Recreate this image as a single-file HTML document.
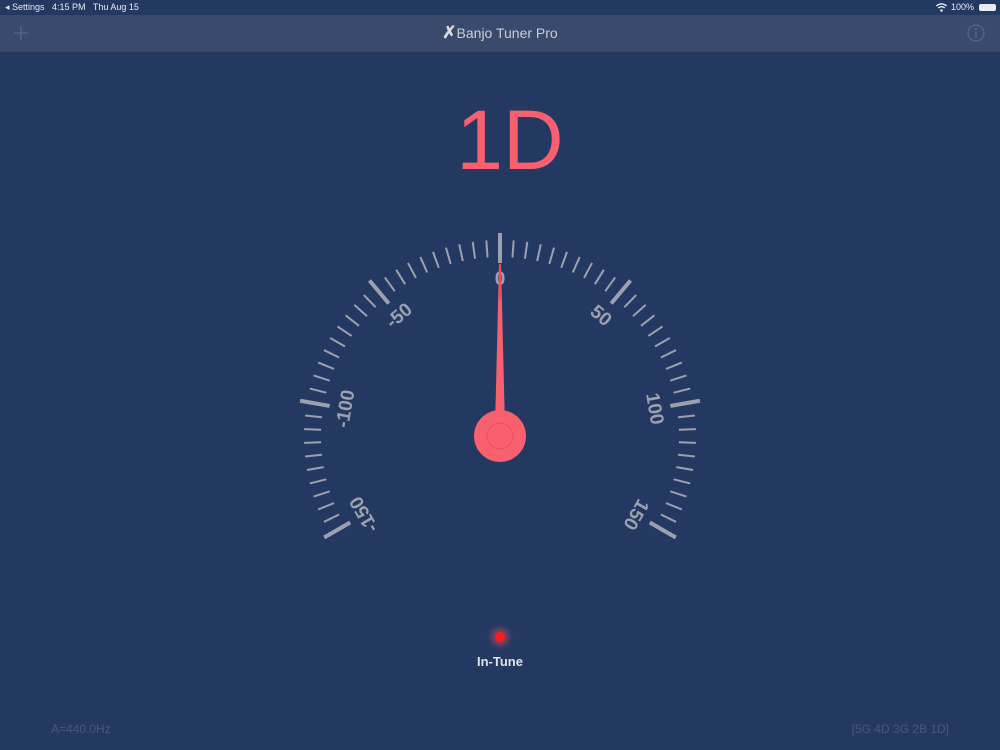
<!DOCTYPE html>
<html><head><meta charset="utf-8"><style>
html,body{margin:0;padding:0}
body{width:1000px;height:750px;overflow:hidden;background:#243962;font-family:"Liberation Sans",sans-serif;position:relative}
.sb{position:absolute;top:0;left:0;width:1000px;height:15px;font-size:9px;color:#e8ecf2;line-height:15px}
.nav{position:absolute;top:15px;left:0;width:1000px;height:36px;background:#3a4a6c;border-bottom:1px solid #34446a}
.title{position:absolute;left:0;width:1000px;top:0;line-height:36px;text-align:center;color:#c9ced8;font-size:14px}
.note{position:absolute;top:96px;left:10px;width:1000px;text-align:center;color:#f6606f;font-size:84px;line-height:88px}
.it{position:absolute;top:654px;left:0;width:1000px;text-align:center;color:#dfe3ea;font-size:13px;font-weight:bold}
.dot{position:absolute;left:495px;top:632px;width:10px;height:10px;border-radius:50%;background:#ff1a1a;box-shadow:0 0 6px 4px rgba(255,80,90,.45)}
.ft{position:absolute;top:722px;color:#46577f;font-size:12px}
</style></head><body>
<div class="sb"><span style="position:absolute;left:5px">◂ Settings&nbsp;&nbsp; 4:15 PM&nbsp;&nbsp; Thu Aug 15</span>
<span style="position:absolute;right:26px">100%</span>
<span style="position:absolute;right:4px;top:4px;width:17px;height:7px;background:#e8ecf2;border-radius:2px"></span>
<svg style="position:absolute;left:936px;top:3px" width="11" height="9" viewBox="0 0 11 9"><path d="M0.5 3 A7 7 0 0 1 10.5 3 M2.3 5 A4.5 4.5 0 0 1 8.7 5" stroke="#e8ecf2" stroke-width="1.4" fill="none"/><circle cx="5.5" cy="7.5" r="1.3" fill="#e8ecf2"/></svg>
</div>
<div class="nav">
<svg style="position:absolute;left:14px;top:11px" width="14" height="14"><path d="M7 0V14M0 7H14" stroke="#56668a" stroke-width="1.3"/></svg>
<div class="title"><span style="color:#d8dae0;font-weight:bold;font-size:17px">✗</span>Banjo Tuner Pro</div>
<svg style="position:absolute;left:967px;top:9px" width="18" height="18"><circle cx="9" cy="9" r="8" stroke="#56668a" stroke-width="1.2" fill="none"/><path d="M9 7.5V13.5" stroke="#56668a" stroke-width="1.3"/><circle cx="9" cy="5" r="1" fill="#56668a"/></svg>
</div>
<div class="note">1D</div>
<svg style="position:absolute;left:0;top:0" width="1000" height="750">
<g stroke="#9ca1b0" stroke-width="2">
<g stroke-width="4"><line x1="500" y1="233" x2="500" y2="263" transform="rotate(-120 500 436)"/><line x1="500" y1="233" x2="500" y2="263" transform="rotate(-80 500 436)"/><line x1="500" y1="233" x2="500" y2="263" transform="rotate(-40 500 436)"/><line x1="500" y1="233" x2="500" y2="263"/><line x1="500" y1="233" x2="500" y2="263" transform="rotate(40 500 436)"/><line x1="500" y1="233" x2="500" y2="263" transform="rotate(80 500 436)"/><line x1="500" y1="233" x2="500" y2="263" transform="rotate(120 500 436)"/></g>
<line x1="500" y1="240" x2="500" y2="257" transform="rotate(-116 500 436)"/><line x1="500" y1="240" x2="500" y2="257" transform="rotate(-112 500 436)"/><line x1="500" y1="240" x2="500" y2="257" transform="rotate(-108 500 436)"/><line x1="500" y1="240" x2="500" y2="257" transform="rotate(-104 500 436)"/><line x1="500" y1="240" x2="500" y2="257" transform="rotate(-100 500 436)"/><line x1="500" y1="240" x2="500" y2="257" transform="rotate(-96 500 436)"/><line x1="500" y1="240" x2="500" y2="257" transform="rotate(-92 500 436)"/><line x1="500" y1="240" x2="500" y2="257" transform="rotate(-88 500 436)"/><line x1="500" y1="240" x2="500" y2="257" transform="rotate(-84 500 436)"/>
<line x1="500" y1="240" x2="500" y2="257" transform="rotate(-76 500 436)"/><line x1="500" y1="240" x2="500" y2="257" transform="rotate(-72 500 436)"/><line x1="500" y1="240" x2="500" y2="257" transform="rotate(-68 500 436)"/><line x1="500" y1="240" x2="500" y2="257" transform="rotate(-64 500 436)"/><line x1="500" y1="240" x2="500" y2="257" transform="rotate(-60 500 436)"/><line x1="500" y1="240" x2="500" y2="257" transform="rotate(-56 500 436)"/><line x1="500" y1="240" x2="500" y2="257" transform="rotate(-52 500 436)"/><line x1="500" y1="240" x2="500" y2="257" transform="rotate(-48 500 436)"/><line x1="500" y1="240" x2="500" y2="257" transform="rotate(-44 500 436)"/>
<line x1="500" y1="240" x2="500" y2="257" transform="rotate(-36 500 436)"/><line x1="500" y1="240" x2="500" y2="257" transform="rotate(-32 500 436)"/><line x1="500" y1="240" x2="500" y2="257" transform="rotate(-28 500 436)"/><line x1="500" y1="240" x2="500" y2="257" transform="rotate(-24 500 436)"/><line x1="500" y1="240" x2="500" y2="257" transform="rotate(-20 500 436)"/><line x1="500" y1="240" x2="500" y2="257" transform="rotate(-16 500 436)"/><line x1="500" y1="240" x2="500" y2="257" transform="rotate(-12 500 436)"/><line x1="500" y1="240" x2="500" y2="257" transform="rotate(-8 500 436)"/><line x1="500" y1="240" x2="500" y2="257" transform="rotate(-4 500 436)"/>
<line x1="500" y1="240" x2="500" y2="257" transform="rotate(4 500 436)"/><line x1="500" y1="240" x2="500" y2="257" transform="rotate(8 500 436)"/><line x1="500" y1="240" x2="500" y2="257" transform="rotate(12 500 436)"/><line x1="500" y1="240" x2="500" y2="257" transform="rotate(16 500 436)"/><line x1="500" y1="240" x2="500" y2="257" transform="rotate(20 500 436)"/><line x1="500" y1="240" x2="500" y2="257" transform="rotate(24 500 436)"/><line x1="500" y1="240" x2="500" y2="257" transform="rotate(28 500 436)"/><line x1="500" y1="240" x2="500" y2="257" transform="rotate(32 500 436)"/><line x1="500" y1="240" x2="500" y2="257" transform="rotate(36 500 436)"/>
<line x1="500" y1="240" x2="500" y2="257" transform="rotate(44 500 436)"/><line x1="500" y1="240" x2="500" y2="257" transform="rotate(48 500 436)"/><line x1="500" y1="240" x2="500" y2="257" transform="rotate(52 500 436)"/><line x1="500" y1="240" x2="500" y2="257" transform="rotate(56 500 436)"/><line x1="500" y1="240" x2="500" y2="257" transform="rotate(60 500 436)"/><line x1="500" y1="240" x2="500" y2="257" transform="rotate(64 500 436)"/><line x1="500" y1="240" x2="500" y2="257" transform="rotate(68 500 436)"/><line x1="500" y1="240" x2="500" y2="257" transform="rotate(72 500 436)"/><line x1="500" y1="240" x2="500" y2="257" transform="rotate(76 500 436)"/>
<line x1="500" y1="240" x2="500" y2="257" transform="rotate(84 500 436)"/><line x1="500" y1="240" x2="500" y2="257" transform="rotate(88 500 436)"/><line x1="500" y1="240" x2="500" y2="257" transform="rotate(92 500 436)"/><line x1="500" y1="240" x2="500" y2="257" transform="rotate(96 500 436)"/><line x1="500" y1="240" x2="500" y2="257" transform="rotate(100 500 436)"/><line x1="500" y1="240" x2="500" y2="257" transform="rotate(104 500 436)"/><line x1="500" y1="240" x2="500" y2="257" transform="rotate(108 500 436)"/><line x1="500" y1="240" x2="500" y2="257" transform="rotate(112 500 436)"/><line x1="500" y1="240" x2="500" y2="257" transform="rotate(116 500 436)"/>
</g>
<g fill="#9ca1b0" font-size="19" font-weight="bold" text-anchor="middle" font-family="Liberation Sans,sans-serif">
<text x="500" y="285" transform="rotate(-120 500 436)">-150</text>
<text x="500" y="285" transform="rotate(-80 500 436)">-100</text>
<text x="500" y="285" transform="rotate(-40 500 436)">-50</text>
<text x="500" y="285">0</text>
<text x="500" y="285" transform="rotate(40 500 436)">50</text>
<text x="500" y="285" transform="rotate(80 500 436)">100</text>
<text x="500" y="285" transform="rotate(120 500 436)">150</text>
</g>
<polygon points="499,264 501,264 505,428 495,428" fill="#f6606f"/>
<line x1="500" y1="264" x2="500" y2="300" stroke="#ff3344" stroke-width="1"/>
<circle cx="500" cy="436" r="26" fill="#f6606f"/>
<circle cx="500" cy="436" r="13" fill="none" stroke="#e5505f" stroke-width="1"/>
</svg>
<div class="dot"></div>
<div class="it">In-Tune</div>
<div class="ft" style="left:51px">A=440.0Hz</div>
<div class="ft" style="right:51px">[5G 4D 3G 2B 1D]</div>
</body></html>
